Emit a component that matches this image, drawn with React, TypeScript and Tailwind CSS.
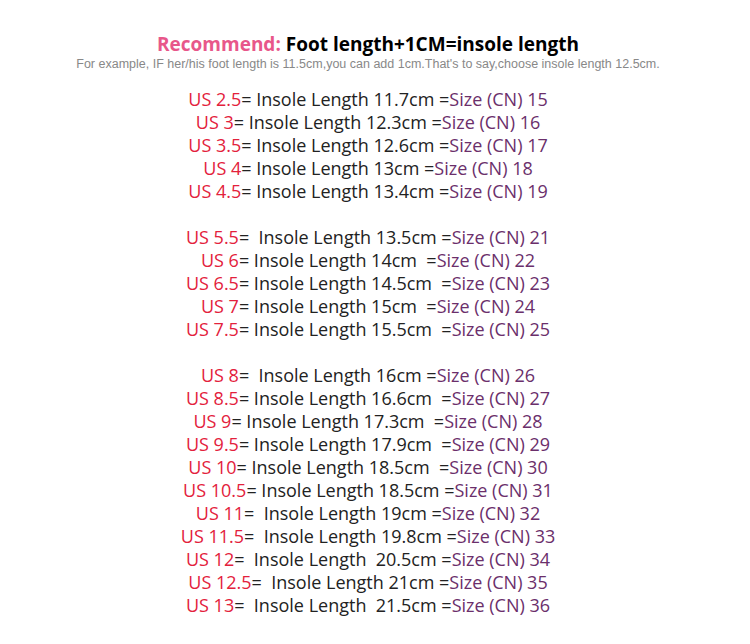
const groups: [string, string, string][][] = [
  [
    ['US 2.5', '= Insole Length 11.7cm =', 'Size (CN) 15'],
    ['US 3', '= Insole Length 12.3cm =', 'Size (CN) 16'],
    ['US 3.5', '= Insole Length 12.6cm =', 'Size (CN) 17'],
    ['US 4', '= Insole Length 13cm =', 'Size (CN) 18'],
    ['US 4.5', '= Insole Length 13.4cm =', 'Size (CN) 19'],
  ],
  [
    ['US 5.5', '=  Insole Length 13.5cm =', 'Size (CN) 21'],
    ['US 6', '= Insole Length 14cm  =', 'Size (CN) 22'],
    ['US 6.5', '= Insole Length 14.5cm  =', 'Size (CN) 23'],
    ['US 7', '= Insole Length 15cm  =', 'Size (CN) 24'],
    ['US 7.5', '= Insole Length 15.5cm  =', 'Size (CN) 25'],
  ],
  [
    ['US 8', '=  Insole Length 16cm =', 'Size (CN) 26'],
    ['US 8.5', '= Insole Length 16.6cm  =', 'Size (CN) 27'],
    ['US 9', '= Insole Length 17.3cm  =', 'Size (CN) 28'],
    ['US 9.5', '= Insole Length 17.9cm  =', 'Size (CN) 29'],
    ['US 10', '= Insole Length 18.5cm  =', 'Size (CN) 30'],
    ['US 10.5', '= Insole Length 18.5cm =', 'Size (CN) 31'],
    ['US 11', '=  Insole Length 19cm =', 'Size (CN) 32'],
    ['US 11.5', '=  Insole Length 19.8cm =', 'Size (CN) 33'],
    ['US 12', '=  Insole Length  20.5cm =', 'Size (CN) 34'],
    ['US 12.5', '=  Insole Length 21cm =', 'Size (CN) 35'],
    ['US 13', '=  Insole Length  21.5cm =', 'Size (CN) 36'],
  ],
];

export default function App() {
  return (
    <div className="h-[644px] w-[750px] bg-white">
      <div className="w-[736px] pt-[32px] text-center">
        <h1 className="font-['Open_Sans',sans-serif] text-[19px] leading-[25px] font-bold text-black">
          <span className="text-[#e8578a]">Recommend: </span>
          Foot length+1CM=insole length
        </h1>
        <p className="font-['Liberation_Sans',Arial,sans-serif] text-[12.5px] leading-[15px] text-[#888888]">
          For example, IF her/his foot length is 11.5cm,you can add 1cm.That&apos;s to say,choose insole length 12.5cm.
        </p>

        <div className="mt-[16px] flex flex-col gap-[23px] font-['Open_Sans',sans-serif] text-[18px] leading-[23px]">
          {groups.map((rows, g) => (
            <div key={g}>
              {rows.map(([us, mid, size], i) => (
                <div key={i} className="whitespace-pre">
                  <span className="text-[#e3213c]">{us}</span>
                  <span className="text-[#222222]">{mid}</span>
                  <span className="text-[#6b2f6b]">{size}</span>
                </div>
              ))}
            </div>
          ))}
        </div>
      </div>
    </div>
  );
}
